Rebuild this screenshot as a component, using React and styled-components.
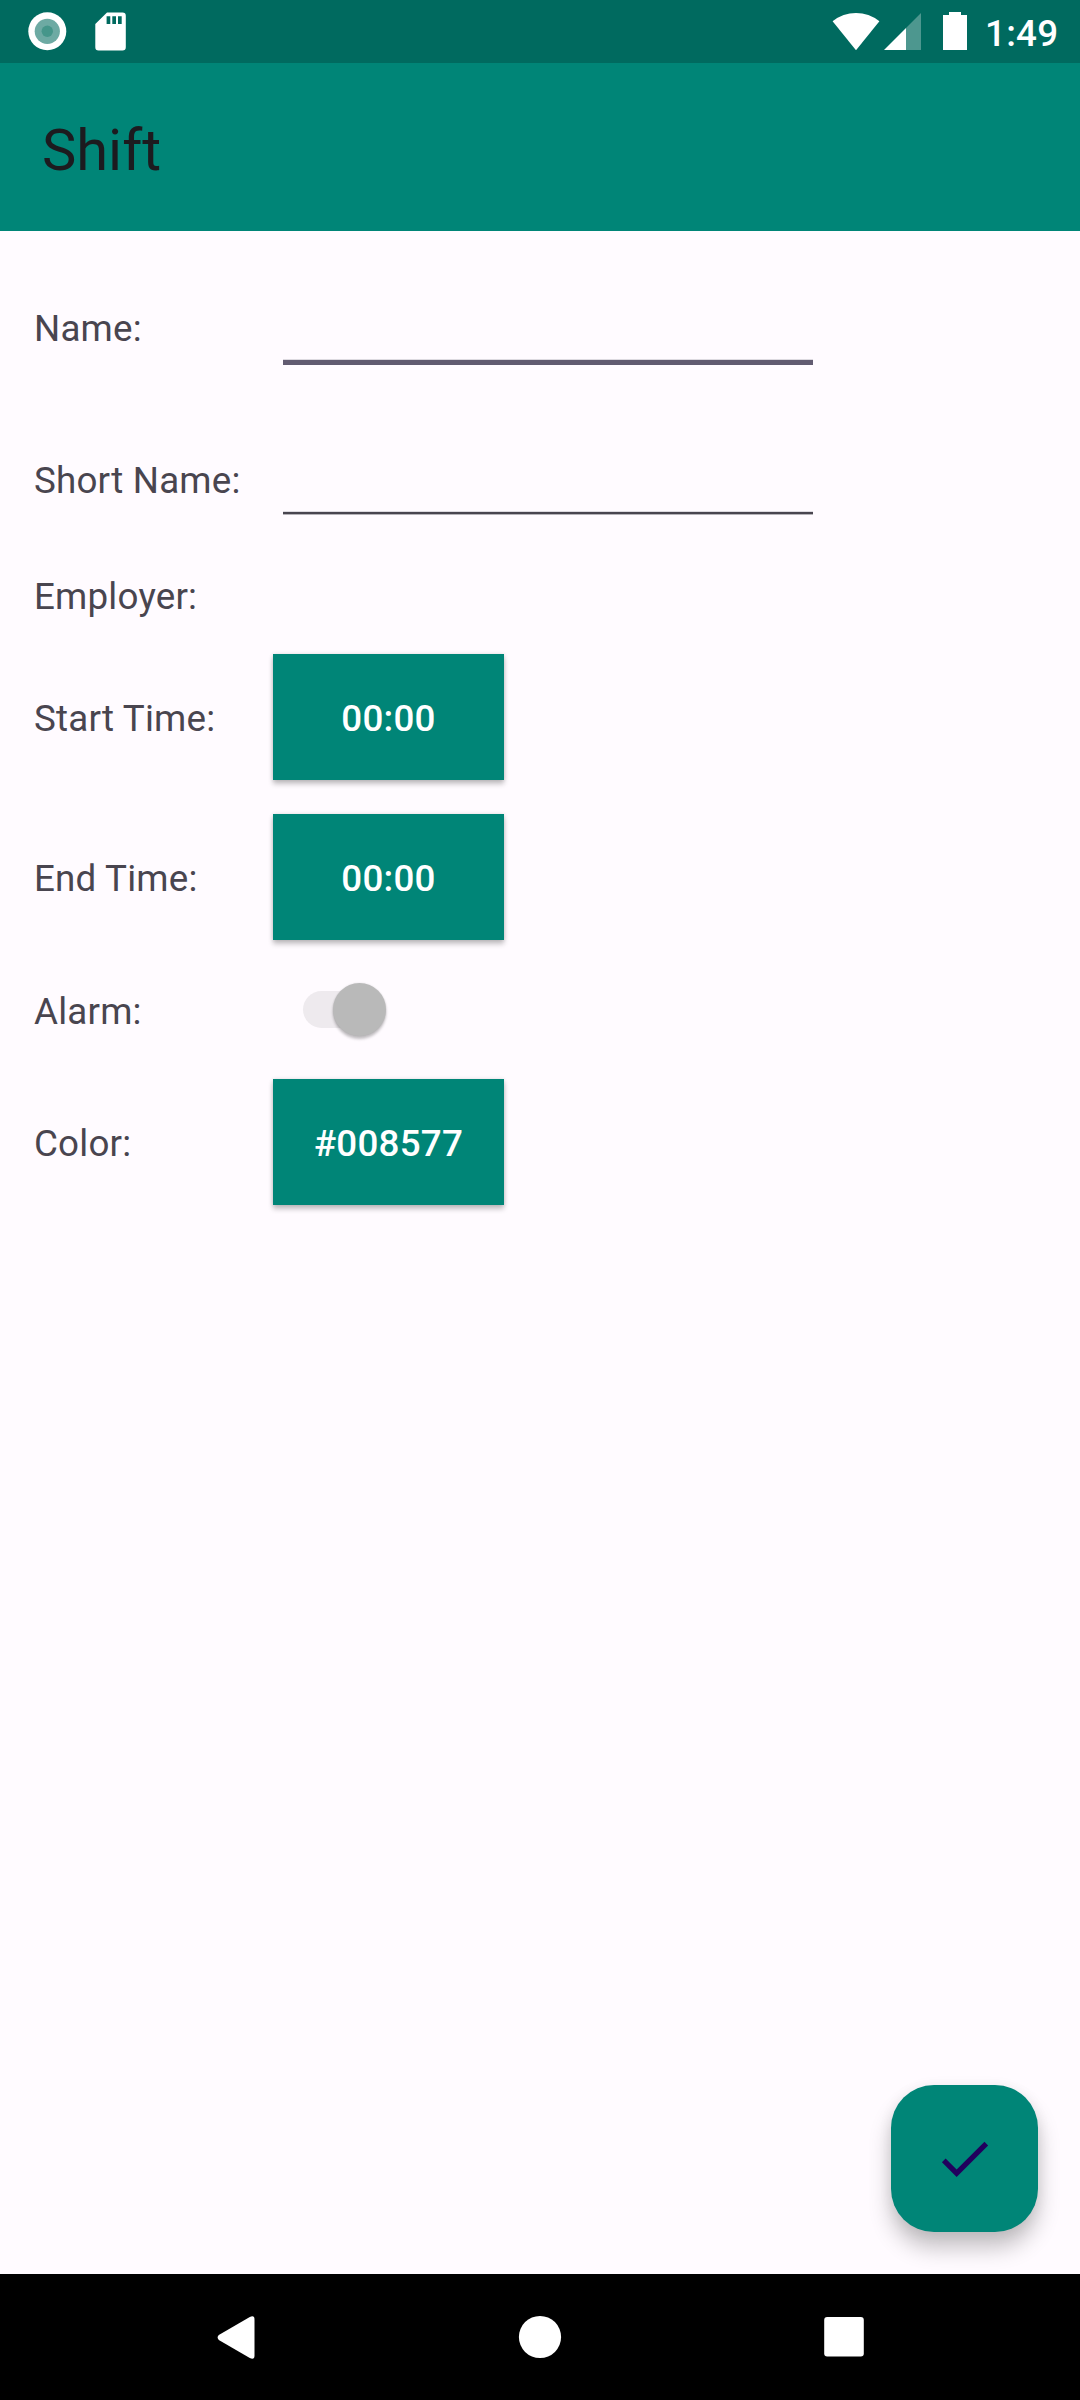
import React from "react";
import styled, { createGlobalStyle } from "styled-components";

const teal = "#008577";

const GlobalStyle = createGlobalStyle`
  *, *::before, *::after { box-sizing: border-box; }
  body { margin: 0; background: #fffbff; }
`;

const Screen = styled.div`
  width: 1080px;
  height: 2400px;
  display: flex;
  flex-direction: column;
  overflow: hidden;
  background: #fffbff;
  font-family: Roboto, "Liberation Sans", sans-serif;
  color: #49454f;
`;

const StatusBar = styled.div`
  height: 63px;
  flex: none;
  display: flex;
  justify-content: space-between;
  background: #006a5f;
`;

const StatusIcons = styled.svg`
  display: block;
  height: 63px;
  width: ${(p) => p.$width}px;
`;

const StatusEnd = styled.div`
  display: flex;
  width: 250px;
`;

const Clock = styled.span`
  margin-left: 5px;
  font-size: 36.75px;
  font-weight: 500;
  line-height: 68px;
  letter-spacing: 0.25px;
  color: #fff;
  white-space: nowrap;
`;

const AppBar = styled.header`
  height: 168px;
  flex: none;
  display: flex;
  align-items: center;
  padding-left: 42px;
  background: ${teal};
`;

const Title = styled.h1`
  margin: 0;
  padding-top: 5px;
  font-size: 57.75px;
  font-weight: 400;
  line-height: 68px;
  color: #1c1b1f;
`;

const Form = styled.main`
  flex: 1;
  display: flex;
  flex-direction: column;
  padding-left: 34px;
`;

const Row = styled.div`
  display: flex;
  height: ${(p) => p.$height}px;
`;

const Label = styled.label`
  width: 239px;
  flex: none;
  padding-top: ${(p) => p.$top}px;
  font-size: 36.75px;
  line-height: 44px;
  letter-spacing: 0.2px;
  white-space: nowrap;
`;

const Field = styled.div`
  width: 530px;
  margin-left: 10px;
  height: ${(p) => p.$height}px;
  border-bottom: ${(p) => (p.$focused ? "5px solid #625b71" : "2px solid #49454f")};
  box-shadow: ${(p) => (p.$focused ? "none" : "0 1px 0 #b5b2b8")};
`;

const FieldEdge = styled.div`
  height: 100%;
  border-bottom: 1px solid #dddae0;
`;

const Button = styled.button`
  width: 231px;
  height: 126px;
  border: 0;
  padding: 3px 0 0;
  background: ${teal};
  box-shadow: 0 4px 5px rgba(0, 0, 0, 0.23), 0 0 4px rgba(0, 0, 0, 0.12);
  color: #fff;
  font-family: inherit;
  font-size: 36.75px;
  font-weight: 500;
  line-height: 44px;
  letter-spacing: 0.25px;
`;

const Track = styled.div`
  width: 82px;
  height: 37px;
  margin: 37px 0 0 30px;
  display: flex;
  align-items: center;
  justify-content: flex-end;
  border-radius: 19px;
  background: #eeeaee;
`;

const Thumb = styled.div`
  width: 53px;
  height: 53px;
  flex: none;
  margin-right: -1px;
  border-radius: 50%;
  background: #b9b9b9;
  box-shadow: 0 3px 3px rgba(0, 0, 0, 0.24), 0 0 2px rgba(0, 0, 0, 0.12);
`;

const Fab = styled.button`
  width: 147px;
  height: 147px;
  margin: auto 42px 42px auto;
  flex: none;
  display: flex;
  align-items: center;
  justify-content: center;
  border: 0;
  padding: 0;
  border-radius: 43px;
  background: ${teal};
  box-shadow: 0 16px 22px rgba(0, 0, 0, 0.23), 0 2px 14px rgba(0, 0, 0, 0.07);
`;

const NavBar = styled.nav`
  height: 126px;
  flex: none;
  display: flex;
  justify-content: space-between;
  align-items: center;
  padding: 0 205px;
  background: #000;
`;

const NavIcon = styled.svg`
  width: 63px;
  height: 63px;
`;

const TextRow = ({ height, top, label, line, focused }) => (
  <Row $height={height}>
    <Label $top={top}>{label}</Label>
    <Field $height={line} $focused={focused}>
      <FieldEdge />
    </Field>
  </Row>
);

const ButtonRow = ({ height, label, value }) => (
  <Row $height={height}>
    <Label $top={43}>{label}</Label>
    <Button>{value}</Button>
  </Row>
);

export default function App() {
  return (
    <Screen>
      <GlobalStyle />
      <StatusBar>
        <StatusIcons $width={140} viewBox="0 0 140 63">
          <circle cx="47.3" cy="31.3" r="19" fill="#fff" />
          <circle cx="47.3" cy="31.3" r="12.6" fill="#6daaa3" />
          <circle cx="47.3" cy="31.3" r="5.7" fill="#45968a" />
          <path
            fill="#fff"
            fillRule="evenodd"
            d="M107 12.5h15.500a3.300 3.300 0 0 1 3.300 3.300v31.400a3.300 3.300 0 0 1-3.300 3.300H98.600a3.300 3.300 0 0 1-3.300-3.300V24zM106.600 16.200v7.800h3.700v-7.800zM112.300 16.200v7.800h3.700v-7.800zM118 16.200v7.800h3.700v-7.800z"
          />
        </StatusIcons>
        <StatusEnd>
          <StatusIcons $width={150} viewBox="830 0 150 63">
            <path fill="#fff" d="M832.6 21.200Q843 13 856 13T879.400 21.200L856 50.200z" />
            <path fill="#fff" fillOpacity="0.3" d="M906 50V28L921 13V50z" />
            <path fill="#fff" d="M884 50L906 28V50z" />
            <path fill="#fff" d="M949 12h12v3h6v35h-24V15h6z" />
          </StatusIcons>
          <Clock>1:49</Clock>
        </StatusEnd>
      </StatusBar>
      <AppBar>
        <Title>Shift</Title>
      </AppBar>
      <Form>
        <TextRow height={152} top={76} label="Name:" line={134} focused />
        <TextRow height={183} top={76} label="Short Name:" line={131} />
        <Row $height={88}>
          <Label $top={9}>Employer:</Label>
        </Row>
        <ButtonRow height={160} label="Start Time:" value="00:00" />
        <ButtonRow height={140} label="End Time:" value="00:00" />
        <Row $height={125}>
          <Label $top={36}>Alarm:</Label>
          <Track>
            <Thumb />
          </Track>
        </Row>
        <ButtonRow height={126} label="Color:" value="#008577" />
        <Fab aria-label="Save">
          <svg width="63" height="63" viewBox="0 0 24 24">
            <path fill="#21005d" d="M9 16.2L4.8 12l-1.4 1.400L9 19 21 7l-1.400-1.400L9 16.200z" />
          </svg>
        </Fab>
      </Form>
      <NavBar>
        <NavIcon viewBox="205 2305.500 63 63">
          <path
            fill="#fff"
            d="M218.800 2334.600L249.800 2316.500Q254.500 2314.300 254.500 2319V2355Q254.500 2359.700 249.800 2357.500L218.800 2339.400Q216.400 2337 218.800 2334.600z"
          />
        </NavIcon>
        <NavIcon viewBox="0 0 63 63">
          <circle cx="31" cy="31" r="21.100" fill="#fff" />
        </NavIcon>
        <NavIcon viewBox="0 0 63 63">
          <rect x="12.200" y="11" width="39.600" height="39.600" rx="3" fill="#fff" />
        </NavIcon>
      </NavBar>
    </Screen>
  );
}
